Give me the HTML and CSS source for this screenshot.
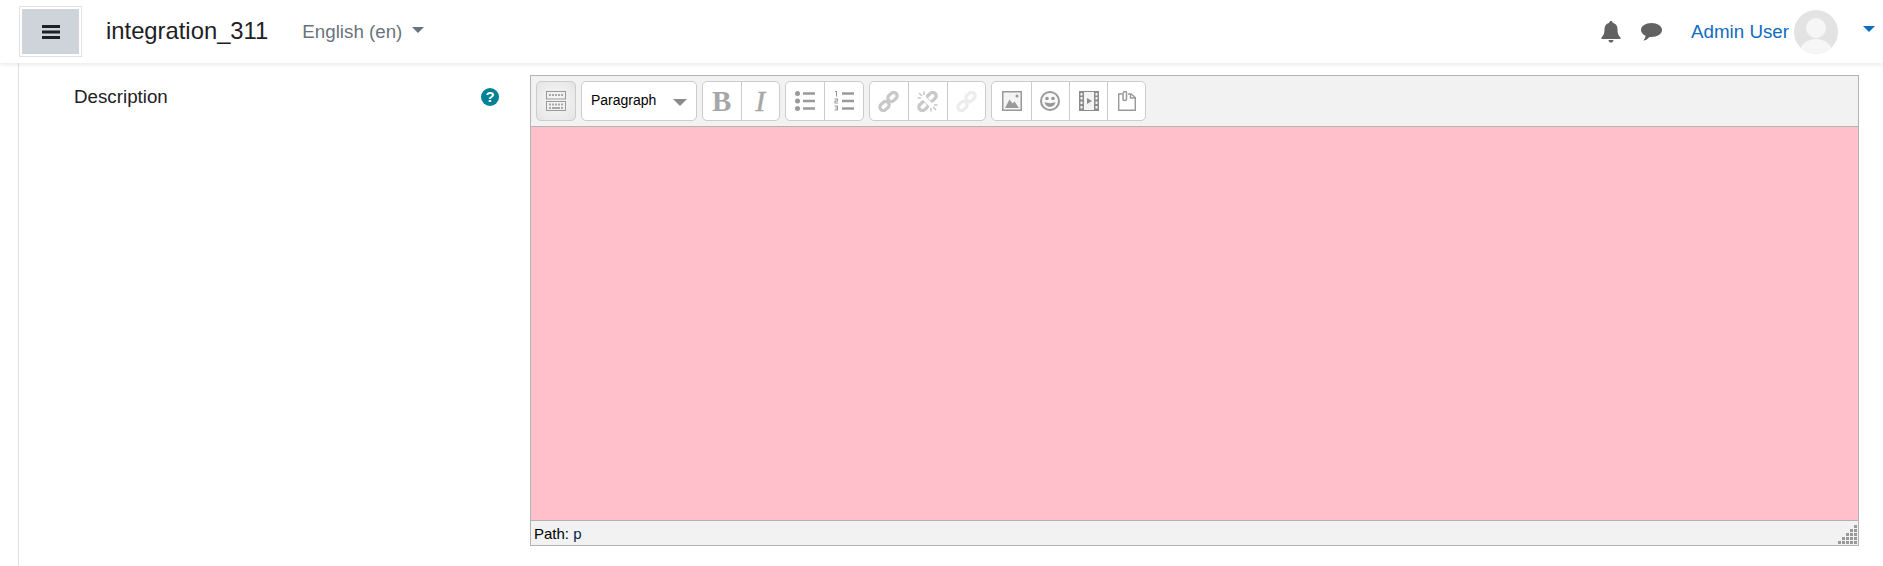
FILE: index.html
```html
<!DOCTYPE html>
<html lang="en">
<head>
  <meta charset="utf-8" />
  <meta name="viewport" content="width=device-width, initial-scale=1" />
  <title>integration_311</title>
  <link rel="stylesheet" href="styles.css">
</head>

<body>
  <header class="navbar">
    <button class="nav-toggle" aria-label="Side panel">
      <span class="nav-toggle-inner">
        <svg width="18" height="14" viewBox="0 0 18 14"><path d="M0 0h18v3H0zM0 5.500h18v3H0zM0 11h18v3H0z" fill="#1d2125"/></svg>
      </span>
    </button>
    <span class="site-name">integration_311</span>
    <span class="lang-menu">English ‎(en)‎<i class="caret"></i></span>

    <div class="nav-right">
      <svg class="nav-icon bell" width="20" height="22" viewBox="0 0 20 22"><path d="M10 0c1 0 1.700.7 1.700 1.700C15 2.500 16.500 5 16.500 8c0 5 1.200 6.500 3 8.500.4.500.3 1.500-.7 1.500H1.200c-1 0-1.100-1-.7-1.500 1.800-2 3-3.500 3-8.500 0-3 1.500-5.500 4.800-6.300C8.300.7 9 0 10 0zM7.500 19h5c0 1.500-1.100 2.600-2.500 2.600S7.500 20.500 7.500 19z" fill="#626262"/></svg>
      <svg class="nav-icon chat" width="21" height="18" viewBox="0 0 21 18"><path d="M10.500 0C16.300 0 21 3 21 7s-4.700 7-10.500 7c-.7 0-1.400 0-2-.1C7 15.500 4.700 17.500 2.300 17.500c1.300-1.200 2.200-2.900 2.200-4.700C1.800 11.500 0 9.400 0 7c0-4 4.700-7 10.500-7z" fill="#626262"/></svg>
      <span class="user-name">Admin User</span>
      <svg class="avatar" width="44" height="44" viewBox="0 0 44 44"><defs><clipPath id="av"><circle cx="22" cy="22" r="22"/></clipPath></defs><circle cx="22" cy="22" r="22" fill="#e3e3e3"/><g clip-path="url(#av)" fill="#f6f6f6"><circle cx="22" cy="18" r="10"/><ellipse cx="22" cy="42" rx="16" ry="13"/></g></svg>
      <i class="caret caret-blue"></i>
    </div>
  </header>

  <main class="page">
    <div class="form-row">
      <div class="form-label">
        <label>Description</label>
        <svg class="help" width="18" height="18" viewBox="0 0 18 18"><circle cx="9" cy="9" r="9" fill="#008196"/><text x="9" y="14" text-anchor="middle" class="help-mark">?</text></svg>
      </div>

      <div class="editor">
        <div class="toolbar">
          <button class="btn-single">
            <svg width="20" height="20" viewBox="0 0 20 20"><g fill="none" stroke="#999" stroke-width="1"><rect x=".5" y=".5" width="19" height="7.500"/><rect x=".5" y="10.500" width="19" height="9"/></g><path d="M3 3h2v2H3zM6 3h2v2H6zM9 3h2v2H9zM12 3h2v2h-2zM15 3h2v2h-2zM3 12.500h2v2H3zM6 12.500h2v2H6zM9 12.500h2v2H9zM12 12.500h2v2h-2zM15 12.500h2v2h-2zM3 16h2v2H3zM6 16h8v2H6zM15 16h2v2h-2z" fill="#a8a8a8"/></svg>
          </button>
          <div class="format-select">Paragraph<i class="caret caret-grey"></i></div>

          <div class="group">
            <button class="tb tb-b">B</button>
            <button class="tb tb-i">I</button>
          </div>

          <div class="group">
            <button class="tb">
              <svg width="20" height="20" viewBox="0 0 20 20"><g fill="#999"><circle cx="2.500" cy="2.500" r="2.500"/><circle cx="2.500" cy="10" r="2.500"/><circle cx="2.500" cy="17.500" r="2.500"/><path d="M8 1.200h12v2.600H8zM8 8.700h12v2.600H8zM8 16.200h12v2.600H8z"/></g></svg>
            </button>
            <button class="tb">
              <svg width="20" height="20" viewBox="0 0 20 20"><path d="M1 0h2v5.500H2V1H1zM.5 7.500h3.500v3H1.500v1H4v1H.5v-3H3v-1H.5zM.5 14.500H4v5H.5v-1H3v-1H1.200v-1H3v-1H.5z" fill="#999"/><path d="M8 1.200h12v2.600H8zM8 8.700h12v2.600H8zM8 16.200h12v2.600H8z" fill="#999"/></svg>
            </button>
          </div>

          <div class="group group-link">
            <button class="tb">
              <svg width="21" height="21" viewBox="0 0 21 21"><g fill="none" stroke="#c8c8c8" stroke-width="3.300"><rect x="9.500" y="2.500" width="10" height="7" rx="3.500" transform="rotate(-42 14.500 6)"/><rect x="1.500" y="11.500" width="10" height="7" rx="3.500" transform="rotate(-42 6.500 15)"/></g></svg>
            </button>
            <button class="tb">
              <svg width="21" height="21" viewBox="0 0 21 21"><g fill="none" stroke="#c8c8c8" stroke-width="3.300"><rect x="9.500" y="2.500" width="10" height="7" rx="3.500" transform="rotate(-42 14.500 6)"/><rect x="1.500" y="11.500" width="10" height="7" rx="3.500" transform="rotate(-42 6.500 15)"/></g><path d="M3 3l15 15" stroke="#fff" stroke-width="4"/><g stroke="#c8c8c8" stroke-width="1.500"><path d="M7 .5v3.500M.5 7H4M14 17v3.500M17 14h3.500M2 2l3 3M16 16l3 3"/></g></svg>
            </button>
            <button class="tb">
              <svg width="21" height="21" viewBox="0 0 21 21"><g fill="none" stroke="#ececec" stroke-width="3.300"><rect x="9.500" y="2.500" width="10" height="7" rx="3.500" transform="rotate(-42 14.500 6)"/><rect x="1.500" y="11.500" width="10" height="7" rx="3.500" transform="rotate(-42 6.500 15)"/></g></svg>
            </button>
          </div>

          <div class="group group-media">
            <button class="tb">
              <svg width="20" height="20" viewBox="0 0 20 20"><rect x=".75" y=".75" width="18.500" height="18.500" fill="#f4f4f4" stroke="#999" stroke-width="1.500"/><path d="M3 17l4.500-8.500 3 4 2-2 4.500 6.500z" fill="#999"/><circle cx="15" cy="5" r="1.500" fill="#999"/></svg>
            </button>
            <button class="tb">
              <svg width="20" height="20" viewBox="0 0 20 20"><circle cx="10" cy="10" r="9" fill="#fafafa" stroke="#999" stroke-width="2"/><circle cx="7" cy="7.500" r="1.800" fill="#999"/><circle cx="13" cy="7.500" r="1.800" fill="#999"/><path d="M4.500 11c1 6.500 10 6.500 11 0-3 1.500-8 1.500-11 0z" fill="#999"/></svg>
            </button>
            <button class="tb">
              <svg width="20" height="20" viewBox="0 0 20 20"><path d="M0 0h20v20H0z" fill="#8c8c8c"/><path d="M5 1h10v18H5zM1.500 2h2v2.500h-2zM1.500 6h2v2.500h-2zM1.500 10.500h2v2.500h-2zM1.500 15h2v2.500h-2zM16.500 2h2v2.500h-2zM16.500 6h2v2.500h-2zM16.500 10.500h2v2.500h-2zM16.500 15h2v2.500h-2z" fill="#f4f4f4"/><path d="M8 7l5 3-5 3z" fill="#8c8c8c"/></svg>
            </button>
            <button class="tb">
              <svg width="18" height="20" viewBox="0 0 18 20"><path d="M4 3H.7v16.300h16.600V6.500L13 3h-3" fill="none" stroke="#999" stroke-width="1.400"/><path d="M12.500 3v4h4.800" fill="none" stroke="#999" stroke-width="1.400"/><path d="M5 2.500V8c0 2 3.500 2 3.500 0V1.500C8.500.2 5 .2 5 2.500z" fill="none" stroke="#999" stroke-width="1.500"/></svg>
            </button>
          </div>
        </div>

        <div class="edit-area"></div>

        <div class="statusbar">
          <span>Path: <a class="path-link">p</a></span>
          <svg class="resize" width="20" height="20" viewBox="0 0 20 20"><path d="M16 0h3v3h-3zM12 4h3v3h-3zM16 4h3v3h-3zM8 8h3v3H8zM12 8h3v3h-3zM16 8h3v3h-3zM4 12h3v3H4zM8 12h3v3H8zM12 12h3v3h-3zM16 12h3v3h-3zM0 16h3v3H0zM4 16h3v3H4zM8 16h3v3H8zM12 16h3v3h-3zM16 16h3v3h-3z" fill="#999"/></svg>
        </div>
      </div>
    </div>
  </main>
</body>
</html>
```

FILE: styles.css
```css
* {
  box-sizing: border-box;
}

body {
  margin: 0;
  height: 100vh;
  overflow: hidden;
  display: flex;
  flex-direction: column;
  background: white;
  font-family: "Liberation Sans", Arial, sans-serif;
  font-size: 18.75px;
  color: #1d2125;
}

button {
  font-family: inherit;
}

.navbar {
  height: 63px;
  flex-shrink: 0;
  display: flex;
  align-items: center;
  padding-left: 19px;
  background: white;
  box-shadow: 0 2px 4px rgba(0, 0, 0, 0.08);
  position: relative;
}

.nav-toggle {
  width: 63px;
  height: 51px;
  padding: 2px;
  margin: 0;
  border: 1px solid #dee2e6;
  background: white;
}

.nav-toggle-inner {
  display: flex;
  height: 100%;
  align-items: center;
  justify-content: center;
  background: #ced4da;
}

.site-name {
  margin-left: 24px;
  margin-bottom: 2px;
  font-size: 23.8px;
  color: #1d2125;
}

.lang-menu {
  margin-left: 34px;
  color: #6a737b;
  display: flex;
  align-items: center;
}

.caret {
  display: inline-block;
  width: 0;
  height: 0;
  margin-left: 10px;
  border-top: 6px solid #6a737b;
  border-left: 6px solid transparent;
  border-right: 6px solid transparent;
  position: relative;
  top: -2px;
}

.nav-right {
  margin-left: auto;
  display: flex;
  align-items: center;
  padding-right: 8px;
}

.nav-icon {
  display: block;
}

.chat {
  margin-left: 20px;
}

.user-name {
  margin-left: 29px;
  color: #0f6cbf;
}

.avatar {
  margin-left: 5px;
}

.caret-blue {
  margin-left: 25px;
  border-top-color: #0f6cbf;
  top: -3px;
}

.page {
  flex: 1;
  margin-left: 18px;
  border-left: 1px solid #dee2e6;
  padding-top: 12px;
}

.form-row {
  display: flex;
}

.form-label {
  width: 511px;
  padding: 11px 31px 0 55px;
  display: flex;
  justify-content: space-between;
  align-items: flex-start;
}

.help {
  margin-top: 2px;
}

.help-mark {
  font-size: 15px;
  font-weight: bold;
  fill: white;
}

.editor {
  width: 1329px;
  height: 471px;
  display: flex;
  flex-direction: column;
  border: 1px solid #b3b3b3;
}

.toolbar {
  height: 51px;
  display: flex;
  align-items: flex-start;
  gap: 5px;
  padding: 5px 0 0 5px;
  background: #f2f2f2;
  border-bottom: 1px solid #b3b3b3;
}

.btn-single {
  width: 40px;
  height: 40px;
  padding: 0;
  display: flex;
  align-items: center;
  justify-content: center;
  border: 1px solid #ccc;
  border-radius: 5px;
  background: radial-gradient(#f8f8f8, #e4e4e4);
}

.format-select {
  width: 115.500px;
  height: 40px;
  display: flex;
  align-items: center;
  justify-content: space-between;
  padding: 0 9px 2px 9px;
  background: white;
  border: 1px solid #ccc;
  border-radius: 5px;
  font-size: 14px;
  color: #000;
}

.caret-grey {
  border-top: 7px solid #8a8a8a;
  border-left: 7px solid transparent;
  border-right: 7px solid transparent;
  top: 2px;
}

.group {
  height: 40px;
  display: flex;
  background: white;
  border: 1px solid #ccc;
  border-radius: 5px;
}

.tb {
  width: 38.250px;
  height: 38px;
  padding: 0;
  display: flex;
  align-items: center;
  justify-content: center;
  background: transparent;
  border: 0;
  border-left: 1px solid #ccc;
}

.tb:first-child {
  border-left: 0;
}

.group-link .tb {
  width: 38.670px;
}

.tb-b {
  font-family: "Liberation Serif", serif;
  font-weight: bold;
  font-size: 29px;
  color: #a6a6a6;
}

.tb-i {
  font-family: "Liberation Serif", serif;
  font-style: italic;
  font-size: 29px;
  color: #a6a6a6;
  -webkit-text-stroke: 0.5px #a6a6a6;
}

.edit-area {
  flex: 1;
  background: #ffc0cb;
}

.statusbar {
  height: 25px;
  display: flex;
  align-items: center;
  justify-content: space-between;
  padding-left: 3px;
  background: #f2f2f2;
  border-top: 1px solid #b3b3b3;
  font-size: 15px;
  color: #000;
  position: relative;
}

.path-link {
  color: #001f4d;
}

.resize {
  position: absolute;
  right: 0;
  bottom: 0;
}
```
